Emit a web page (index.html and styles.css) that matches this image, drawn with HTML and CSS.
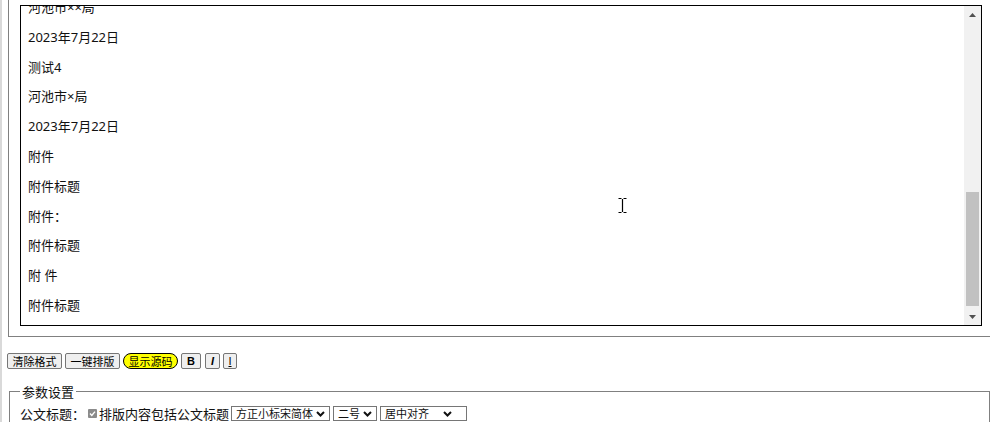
FILE: index.html
```html
<!DOCTYPE html>
<html lang="zh-CN">
<head>
    <meta charset="UTF-8">
    <meta name="viewport" content="width=device-width, initial-scale=1.0">
    <title>公文排版</title>
    <link rel="stylesheet" href="styles.css">
</head>
<body>
    <div class="frame">
        <div class="editor">
            <div class="content">
                <p class="cut">河池市××局</p>
                <p>2023年7月22日</p>
                <p>测试4</p>
                <p>河池市×局</p>
                <p>2023年7月22日</p>
                <p>附件</p>
                <p>附件标题</p>
                <p>附件：</p>
                <p>附件标题</p>
                <p>附 件</p>
                <p>附件标题</p>
            </div>
            <div class="scrollbar">
                <span class="arrow">
                    <svg width="7" height="4" viewBox="0 0 7 4"><polygon points="3.5,0 7,4 0,4" fill="#505050"/></svg>
                </span>
                <span class="track"><span class="thumb"></span></span>
                <span class="arrow">
                    <svg width="7" height="4" viewBox="0 0 7 4"><polygon points="0,0 7,0 3.5,4" fill="#505050"/></svg>
                </span>
            </div>
        </div>
    </div>

    <div class="toolbar">
        <button type="button" class="btn">清除格式</button>
        <button type="button" class="btn">一键排版</button>
        <button type="button" class="btn btn-source">显示源码</button>
        <button type="button" class="btn btn-bold">B</button>
        <button type="button" class="btn btn-italic">I</button>
        <button type="button" class="btn btn-under">I</button>
    </div>

    <fieldset class="params">
        <legend>参数设置</legend>
        <div class="param-row">
            <span class="label">公文标题：</span>
            <span class="check">
                <svg width="9" height="9" viewBox="0 0 9 9"><rect width="9" height="9" rx="1" fill="#8b8b8b"/><polyline points="2,4.6 3.8,6.4 7,2.6" fill="none" stroke="#fff" stroke-width="1.4"/></svg>
            </span>
            <span class="check-text">排版内容包括公文标题</span>
            <span class="select select-font">方正小标宋简体<svg class="chev" width="9" height="6" viewBox="0 0 9 6"><polyline points="1,1 4.5,4.5 8,1" fill="none" stroke="#111" stroke-width="2"/></svg></span>
            <span class="select select-size">二号<svg class="chev" width="9" height="6" viewBox="0 0 9 6"><polyline points="1,1 4.5,4.5 8,1" fill="none" stroke="#111" stroke-width="2"/></svg></span>
            <span class="select select-align">居中对齐<svg class="chev" width="9" height="6" viewBox="0 0 9 6"><polyline points="1,1 4.5,4.5 8,1" fill="none" stroke="#111" stroke-width="2"/></svg></span>
        </div>
    </fieldset>

    <svg class="ibeam" width="11" height="17" viewBox="0 0 11 17">
        <path d="M1.5 1.5h3M6.5 1.5h3M5.5 2v13M1.5 15.5h3M6.5 15.5h3" fill="none" stroke="#000" stroke-width="1.2"/>
    </svg>
</body>
</html>
```

FILE: styles.css
```css
html, body {
    height: 100%;
}

body {
    margin: 0;
    padding-left: 6px;
    border-left: 2px solid #d9d9d9;
    font-family: "Noto Sans", "Noto Sans CJK SC", sans-serif;
    color: #111;
    background-color: #fff;
    overflow: hidden;
    position: relative;
    box-sizing: border-box;
}

.frame {
    width: 1000px;
    padding: 5px 0 10px 11px;
    border-left: 1px solid #808080;
    border-bottom: 1px solid #808080;
}

.editor {
    display: flex;
    width: 962px;
    height: 321px;
    border: 1px solid #000;
    box-sizing: border-box;
}

.content {
    flex: 1;
    padding-left: 7px;
    overflow: hidden;
    font-size: 13px;
    line-height: 16.8px;
}

.content p {
    margin: 13px 0;
}

.content p.cut {
    margin-top: -7px;
}

.scrollbar {
    width: 17px;
    display: flex;
    flex-direction: column;
    background-color: #f1f1f1;
}

.arrow {
    height: 17px;
    display: flex;
    align-items: center;
    justify-content: center;
}

.track {
    flex: 1;
    padding: 0 2px;
}

.thumb {
    display: block;
    margin-top: 169px;
    height: 114px;
    background-color: #c1c1c1;
}

.toolbar {
    display: flex;
    gap: 3px;
    margin: 16px 0 0 -1px;
}

.btn {
    height: 16px;
    padding: 0;
    width: 55px;
    border: 1px solid #767676;
    border-radius: 2px;
    background-color: #efefef;
    font-family: "Noto Sans CJK SC", sans-serif;
    font-size: 11px;
    line-height: 14px;
    color: #000;
    text-align: center;
    box-sizing: border-box;
}

.btn-source {
    background-color: #ffff00;
    border-color: #000;
    border-radius: 8px;
}

.btn-bold {
    width: 20px;
    margin-right: 1px;
    font-family: "Liberation Sans", sans-serif;
    font-weight: bold;
}

.btn-italic {
    width: 15px;
    font-family: "Liberation Sans", sans-serif;
    font-style: italic;
    font-weight: bold;
}

.btn-under {
    width: 14px;
    font-family: "Liberation Sans", sans-serif;
    text-decoration: underline;
}

.params {
    width: 981px;
    margin: 14px 0 0 1px;
    padding: 0 10px 8px;
    border: 1px solid #808080;
    box-sizing: border-box;
    font-family: "Noto Sans CJK SC", sans-serif;
    font-size: 13px;
}

.params legend {
    padding: 0 2px;
    line-height: 17px;
}

.param-row {
    display: flex;
    align-items: center;
    height: 17px;
    margin-top: 5px;
}

.check {
    display: flex;
    margin: 0 2px 0 3px;
}

.check-text {
    margin-right: 2px;
}

.select {
    display: flex;
    align-items: center;
    justify-content: space-between;
    height: 15px;
    margin-right: 3px;
    padding: 0 4px 0 4px;
    border: 1px solid #767676;
    box-sizing: border-box;
    font-size: 11px;
    line-height: 13px;
    background-color: #fff;
}

.select-font {
    width: 99px;
}

.select-size {
    width: 44px;
}

.select-align {
    width: 87px;
    padding-right: 14px;
}

.chev {
    margin-left: 2px;
}

.ibeam {
    position: absolute;
    left: 615px;
    top: 197px;
}
```
